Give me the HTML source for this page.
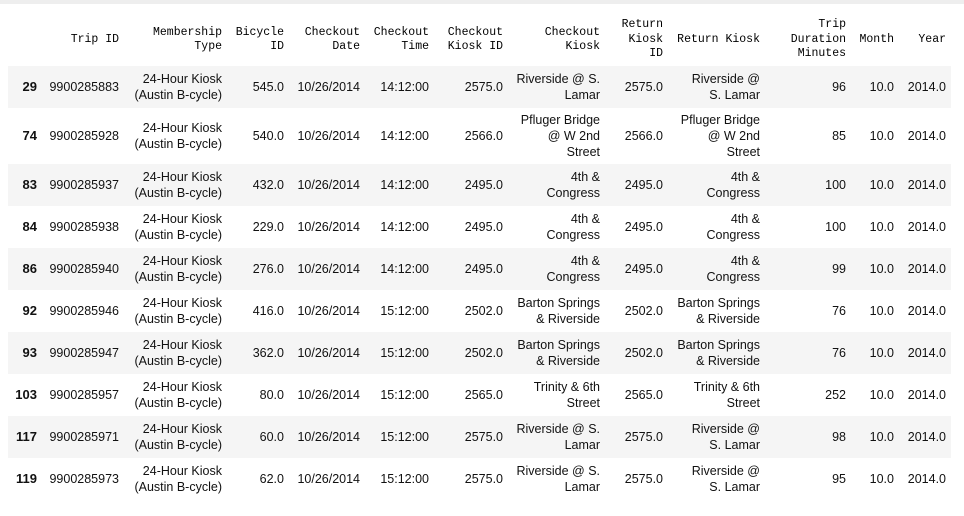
<!DOCTYPE html>
<html><head><style>
body{margin:0;background:#fff;width:964px;height:516px;overflow:hidden;position:relative}
.bar{position:absolute;left:0;top:0;width:964px;height:4px;background:#eeeeee}
table{position:absolute;left:8px;top:8px;border-collapse:collapse;table-layout:fixed;width:943px;color:#111}
td,th{padding:0 5px 0 0;text-align:right;vertical-align:middle;white-space:nowrap;overflow:visible}
thead th{font-family:"Liberation Mono",monospace;font-size:11.5px;font-weight:normal;line-height:14.5px;height:52px;padding-top:6px;color:#000}
tbody td,tbody th{font-family:"Liberation Sans",sans-serif;font-size:12.5px;line-height:16px;height:42px}
tbody th{font-weight:bold;text-align:right;padding-right:5px;font-size:13px}
tbody tr:nth-child(odd){background:#f5f5f5}
tbody tr.t td,tbody tr.t th{height:56px}
</style></head><body>
<div class="bar"></div>
<table>
<colgroup><col style="width:34px"><col style="width:82px"><col style="width:103px"><col style="width:62px"><col style="width:76px"><col style="width:69px"><col style="width:74px"><col style="width:97px"><col style="width:63px"><col style="width:97px"><col style="width:86px"><col style="width:48px"><col style="width:52px"></colgroup>
<thead><tr><th></th><th>Trip ID</th><th>Membership<br>Type</th><th>Bicycle<br>ID</th><th>Checkout<br>Date</th><th>Checkout<br>Time</th><th>Checkout<br>Kiosk ID</th><th>Checkout<br>Kiosk</th><th>Return<br>Kiosk<br>ID</th><th>Return Kiosk</th><th>Trip<br>Duration<br>Minutes</th><th>Month</th><th>Year</th></tr></thead>
<tbody>
<tr><th>29</th><td>9900285883</td><td>24-Hour Kiosk<br>(Austin B-cycle)</td><td>545.0</td><td>10/26/2014</td><td>14:12:00</td><td>2575.0</td><td>Riverside @ S.<br>Lamar</td><td>2575.0</td><td>Riverside @<br>S. Lamar</td><td>96</td><td>10.0</td><td>2014.0</td></tr>
<tr class="t"><th>74</th><td>9900285928</td><td>24-Hour Kiosk<br>(Austin B-cycle)</td><td>540.0</td><td>10/26/2014</td><td>14:12:00</td><td>2566.0</td><td>Pfluger Bridge<br>@ W 2nd<br>Street</td><td>2566.0</td><td>Pfluger Bridge<br>@ W 2nd<br>Street</td><td>85</td><td>10.0</td><td>2014.0</td></tr>
<tr><th>83</th><td>9900285937</td><td>24-Hour Kiosk<br>(Austin B-cycle)</td><td>432.0</td><td>10/26/2014</td><td>14:12:00</td><td>2495.0</td><td>4th &amp;<br>Congress</td><td>2495.0</td><td>4th &amp;<br>Congress</td><td>100</td><td>10.0</td><td>2014.0</td></tr>
<tr><th>84</th><td>9900285938</td><td>24-Hour Kiosk<br>(Austin B-cycle)</td><td>229.0</td><td>10/26/2014</td><td>14:12:00</td><td>2495.0</td><td>4th &amp;<br>Congress</td><td>2495.0</td><td>4th &amp;<br>Congress</td><td>100</td><td>10.0</td><td>2014.0</td></tr>
<tr><th>86</th><td>9900285940</td><td>24-Hour Kiosk<br>(Austin B-cycle)</td><td>276.0</td><td>10/26/2014</td><td>14:12:00</td><td>2495.0</td><td>4th &amp;<br>Congress</td><td>2495.0</td><td>4th &amp;<br>Congress</td><td>99</td><td>10.0</td><td>2014.0</td></tr>
<tr><th>92</th><td>9900285946</td><td>24-Hour Kiosk<br>(Austin B-cycle)</td><td>416.0</td><td>10/26/2014</td><td>15:12:00</td><td>2502.0</td><td>Barton Springs<br>&amp; Riverside</td><td>2502.0</td><td>Barton Springs<br>&amp; Riverside</td><td>76</td><td>10.0</td><td>2014.0</td></tr>
<tr><th>93</th><td>9900285947</td><td>24-Hour Kiosk<br>(Austin B-cycle)</td><td>362.0</td><td>10/26/2014</td><td>15:12:00</td><td>2502.0</td><td>Barton Springs<br>&amp; Riverside</td><td>2502.0</td><td>Barton Springs<br>&amp; Riverside</td><td>76</td><td>10.0</td><td>2014.0</td></tr>
<tr><th>103</th><td>9900285957</td><td>24-Hour Kiosk<br>(Austin B-cycle)</td><td>80.0</td><td>10/26/2014</td><td>15:12:00</td><td>2565.0</td><td>Trinity &amp; 6th<br>Street</td><td>2565.0</td><td>Trinity &amp; 6th<br>Street</td><td>252</td><td>10.0</td><td>2014.0</td></tr>
<tr><th>117</th><td>9900285971</td><td>24-Hour Kiosk<br>(Austin B-cycle)</td><td>60.0</td><td>10/26/2014</td><td>15:12:00</td><td>2575.0</td><td>Riverside @ S.<br>Lamar</td><td>2575.0</td><td>Riverside @<br>S. Lamar</td><td>98</td><td>10.0</td><td>2014.0</td></tr>
<tr><th>119</th><td>9900285973</td><td>24-Hour Kiosk<br>(Austin B-cycle)</td><td>62.0</td><td>10/26/2014</td><td>15:12:00</td><td>2575.0</td><td>Riverside @ S.<br>Lamar</td><td>2575.0</td><td>Riverside @<br>S. Lamar</td><td>95</td><td>10.0</td><td>2014.0</td></tr>
</tbody></table>
</body></html>
